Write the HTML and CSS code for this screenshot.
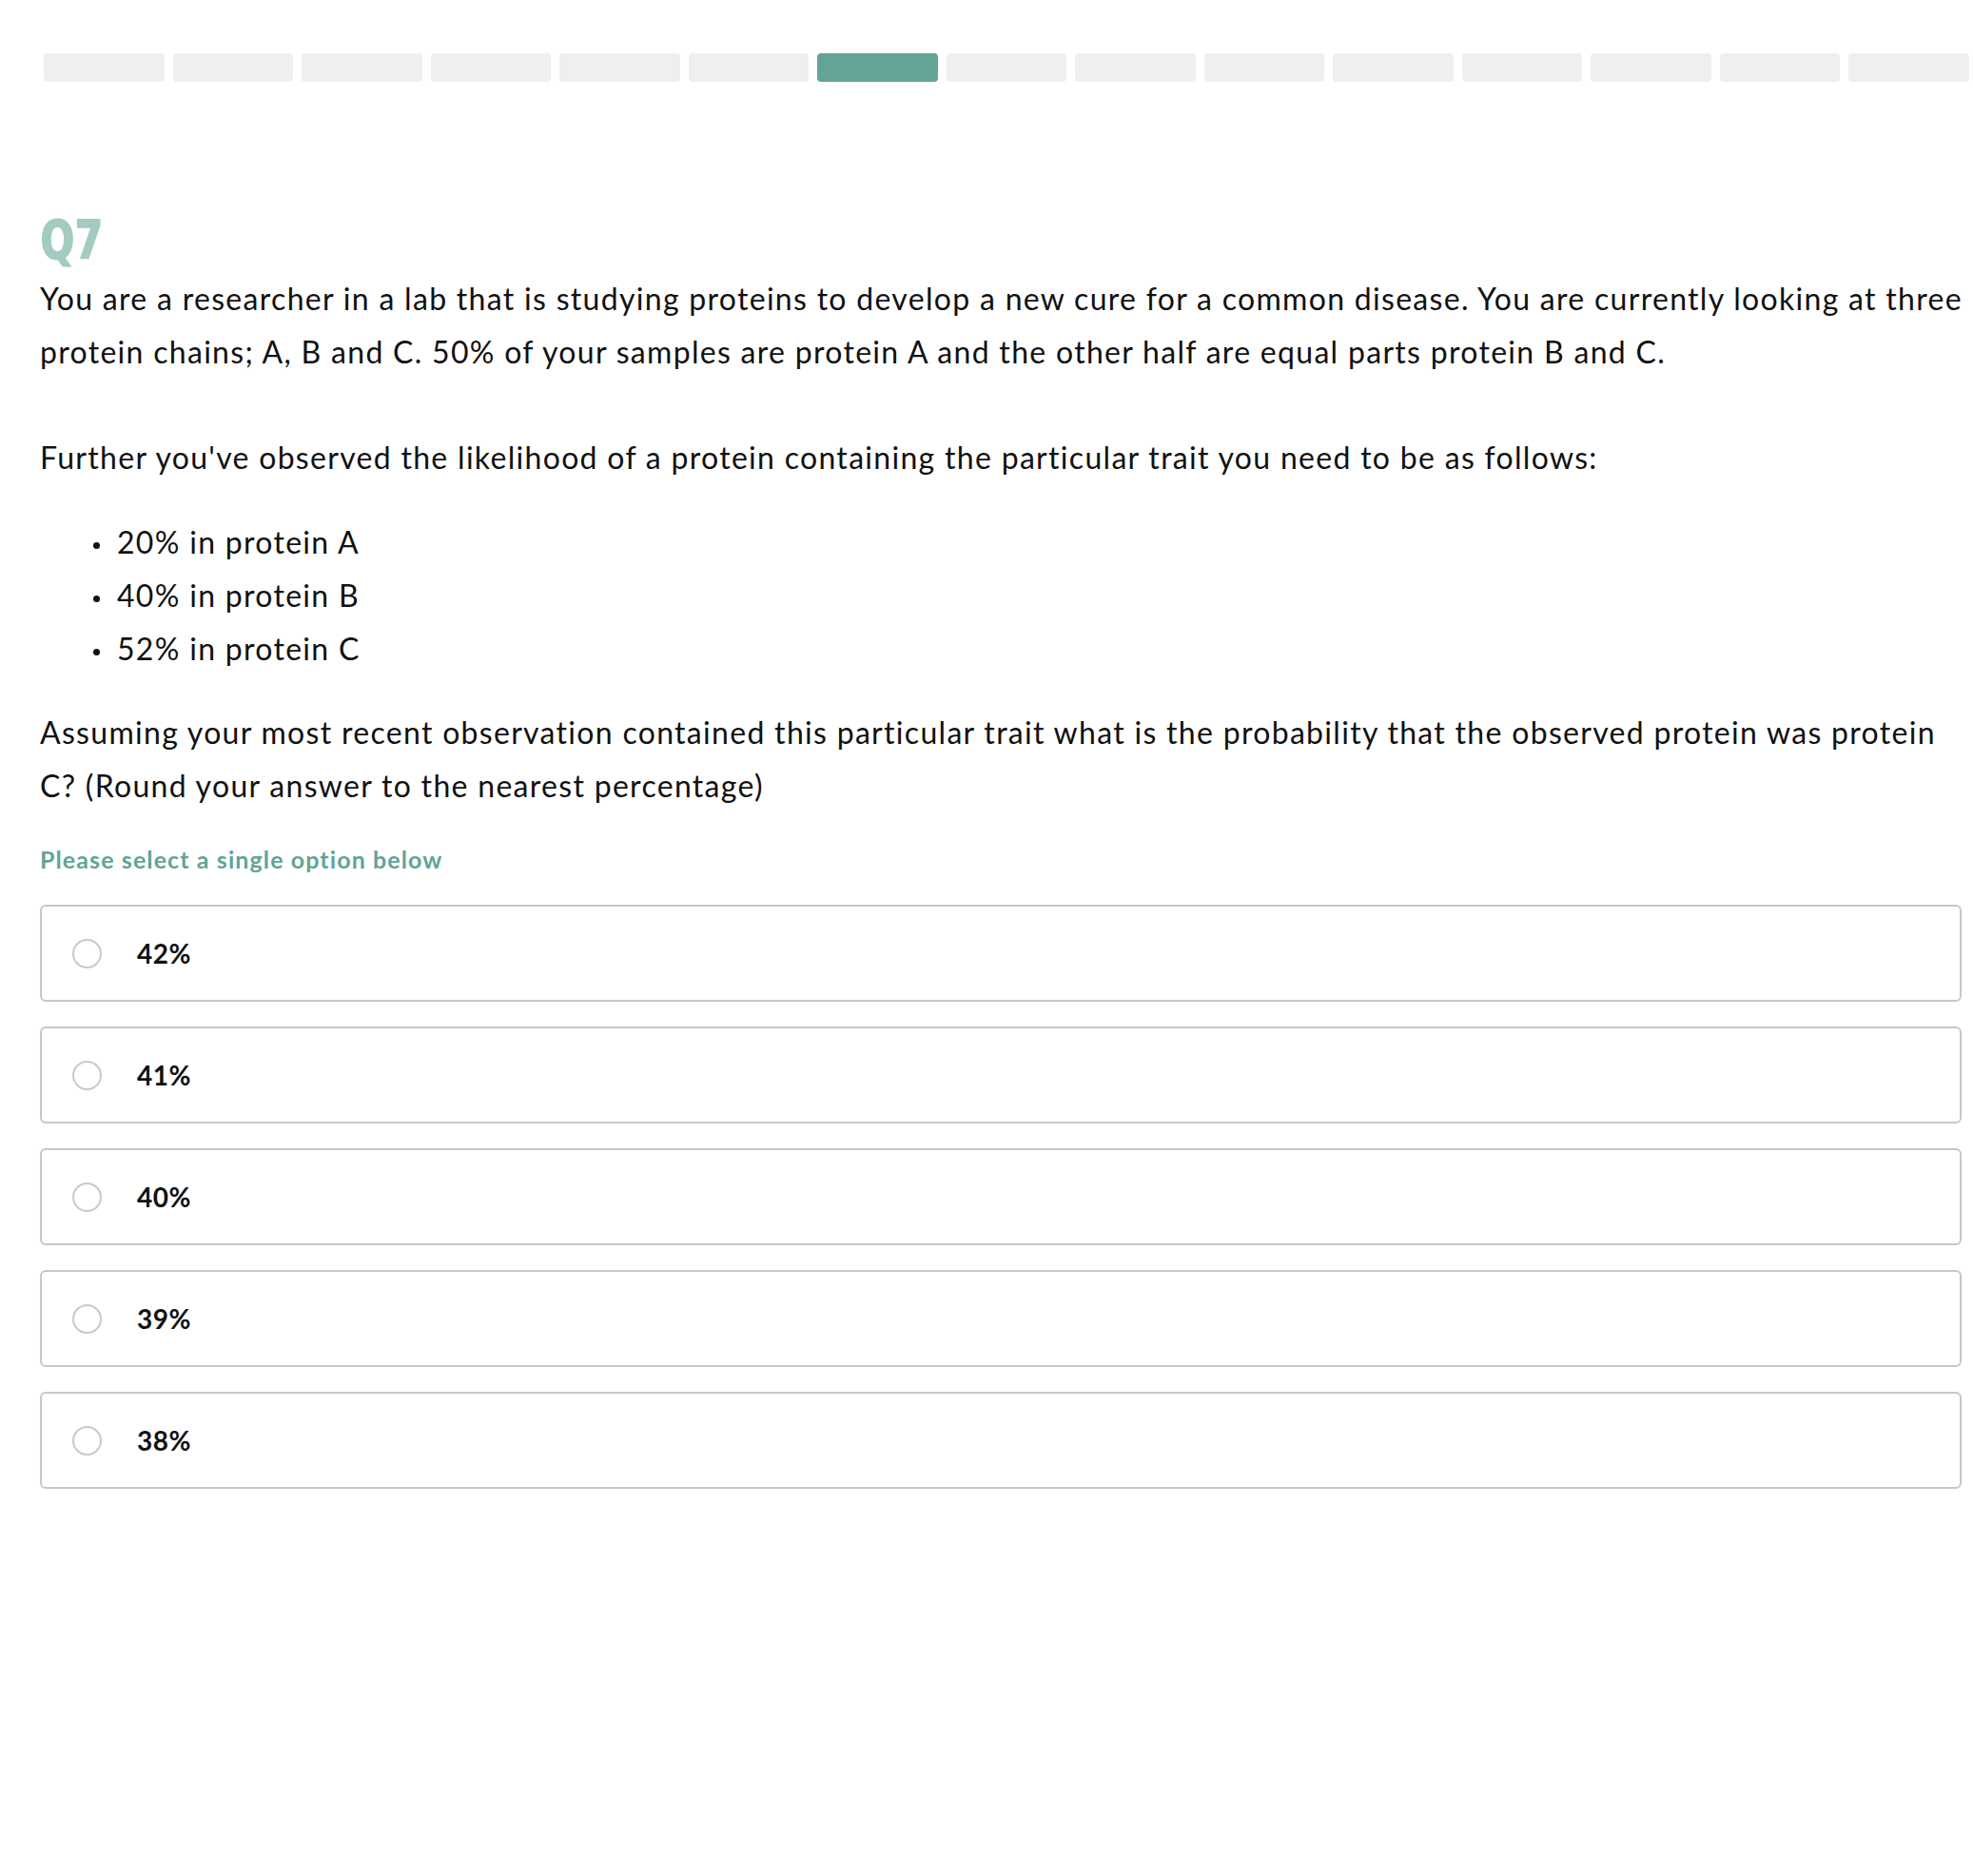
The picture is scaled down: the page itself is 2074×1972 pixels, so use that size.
FILE: index.html
```html
<!DOCTYPE html>
<html lang="en">
<head>
<meta charset="utf-8">
<title>Q7</title>
<link rel="stylesheet" href="styles.css">
</head>
<body>
<div class="progress">
  <span class="seg"></span><span class="seg"></span><span class="seg"></span><span class="seg"></span><span class="seg"></span><span class="seg"></span><span class="seg active"></span><span class="seg"></span><span class="seg"></span><span class="seg"></span><span class="seg"></span><span class="seg"></span><span class="seg"></span><span class="seg"></span><span class="seg"></span>
</div>
<main class="question">
  <h1 class="qnum"><span class="qnum-text">Q7</span></h1>
  <p class="text">You are a researcher in a lab that is studying proteins to develop a new cure for a common disease. You are currently looking at three protein chains; A, B and C. 50% of your samples are protein A and the other half are equal parts protein B and C.</p>
  <p class="text p2">Further you've observed the likelihood of a protein containing the particular trait you need to be as follows:</p>
  <ul class="bullets">
    <li>20% in protein A</li>
    <li>40% in protein B</li>
    <li>52% in protein C</li>
  </ul>
  <p class="text p3">Assuming your most recent observation contained this particular trait what is the probability that the observed protein was protein C? (Round your answer to the nearest percentage)</p>
  <p class="hint">Please select a single option below</p>
  <div class="options">
    <label class="option"><span class="radio"></span><span class="label">42%</span></label>
    <label class="option"><span class="radio"></span><span class="label">41%</span></label>
    <label class="option"><span class="radio"></span><span class="label">40%</span></label>
    <label class="option"><span class="radio"></span><span class="label">39%</span></label>
    <label class="option"><span class="radio"></span><span class="label">38%</span></label>
  </div>
</main>
</body>
</html>
```
FILE: styles.css
```css
* { box-sizing: border-box; }
html, body { margin: 0; padding: 0; background: #fff; }
body {
  font-family: Lato, "Noto Sans", sans-serif;
  color: #111;
}
.progress {
  display: flex;
  gap: 9px;
  margin: 56px 4px 0 46px;
}
.seg {
  flex: 1 1 0;
  height: 30px;
  border-radius: 4px;
  background: #efefef;
}
.seg.active { background: #64a497; }

.question {
  padding: 0 8px 0 42px;
}
.qnum {
  margin: 136px 0 0 0;
  font-family: "DejaVu Sans Condensed", "DejaVu Sans", sans-serif;
  font-weight: 700;
  font-size: 55px;
  line-height: 60px;
  height: 60px;
  color: #a3cbc1;
}
.qnum-text {
  display: inline-block;
  transform: scaleX(0.84);
  transform-origin: left center;
  letter-spacing: 1px;
  -webkit-text-stroke: 2px #a3cbc1;
  padding-left: 1px;
}
.text {
  margin: 4px 0 0 0;
  font-size: 32px;
  line-height: 56px;
  letter-spacing: 1.3px;
}
.p2 { margin-top: 55px; }
.bullets {
  list-style: none;
  margin: 33px 0 0 56px;
  padding: 0;
  font-size: 32px;
  line-height: 56px;
  letter-spacing: 1.3px;
}
.bullets li::before {
  content: "";
  display: inline-block;
  width: 7px;
  height: 7px;
  border-radius: 50%;
  background: #111;
  margin-right: 18px;
  vertical-align: 5px;
}
.p3 { margin-top: 32px; }
.hint {
  margin: 34px 0 0 0;
  font-size: 25px;
  line-height: 30px;
  font-weight: 700;
  color: #5fa596;
  letter-spacing: 1.1px;
}
.options {
  display: flex;
  flex-direction: column;
  gap: 26px;
  margin: 33px 4px 0 0;
}
.option {
  display: flex;
  align-items: center;
  height: 102px;
  border: 2px solid #c7c7c7;
  border-radius: 6px;
  padding-left: 32px;
}
.radio {
  width: 31px;
  height: 31px;
  border: 2px solid #c9c9c9;
  border-radius: 50%;
  flex: none;
}
.label {
  margin-left: 37px;
  font-size: 28px;
  font-weight: 700;
  letter-spacing: 0.5px;
}
```
